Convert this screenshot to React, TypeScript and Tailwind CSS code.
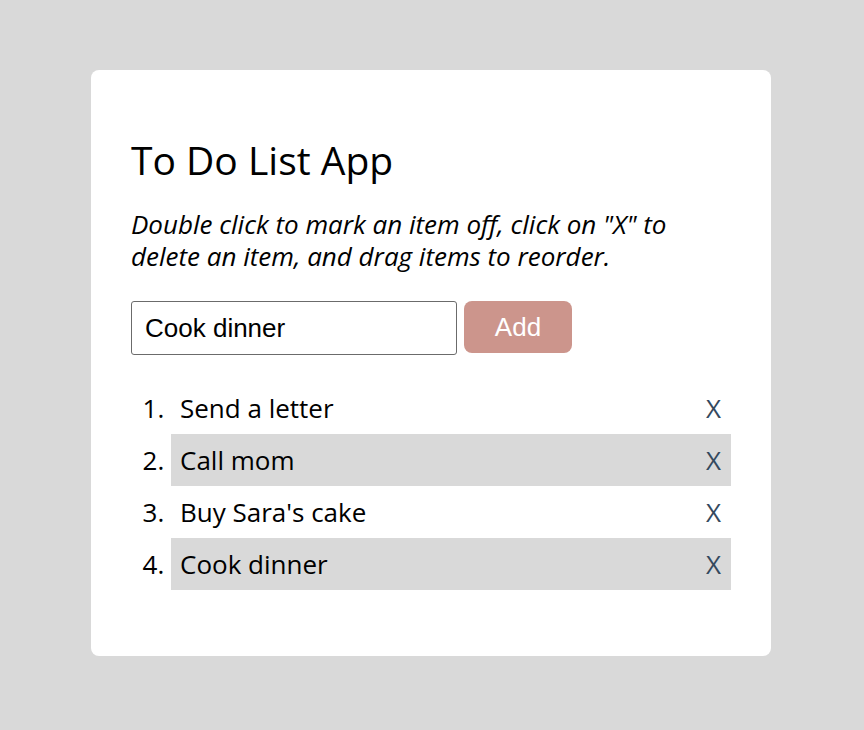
import React, { useState } from "react";

const initialItems = ["Send a letter", "Call mom", "Buy Sara's cake", "Cook dinner"];

export default function App() {
  const [items, setItems] = useState<string[]>(initialItems);
  const [text, setText] = useState("Cook dinner");

  const addItem = () => {
    if (!text.trim()) return;
    setItems([...items, text.trim()]);
  };

  const removeItem = (index: number) => {
    setItems(items.filter((_, i) => i !== index));
  };

  return (
    <div className="min-h-[730px] w-full bg-[#d9d9d9] pt-[70px] pl-[91px] font-['Open_Sans',sans-serif]">
      <div className="w-[680px] rounded-[8px] bg-white px-[40px] pt-[40px] pb-[66px]">
        <h1 className="mt-[24px] text-[39px] leading-[51px] text-black">To Do List App</h1>
        <p className="mt-[23px] text-[26px] italic leading-[32px] text-black">
          Double click to mark an item off, click on "X" to delete an item, and drag items to reorder.
        </p>
        <div className="mt-[29px] flex items-start gap-[7px]">
          <input
            type="text"
            value={text}
            onChange={(e) => setText(e.target.value)}
            className="h-[54px] w-[326px] rounded-[3px] border border-[#6b6b6b] px-[13px] font-['Liberation_Sans',Arial,sans-serif] text-[26px] text-black outline-none"
          />
          <button
            onClick={addItem}
            className="h-[52px] w-[108px] rounded-[8px] bg-[#cc958c] font-['Liberation_Sans',Arial,sans-serif] text-[26px] text-white"
          >
            Add
          </button>
        </div>
        <ol className="mt-[27px] list-decimal pl-[40px] text-[26px] text-black">
          {items.map((item, i) => (
            <li
              key={i}
              className={`pl-[9px] pr-[10px] leading-[52px] ${i % 2 === 1 ? "bg-[#d9d9d9]" : ""}`}
            >
              <div className="flex items-center justify-between">
                <span>{item}</span>
                <button onClick={() => removeItem(i)} className="text-[#34495e]">
                  X
                </button>
              </div>
            </li>
          ))}
        </ol>
      </div>
    </div>
  );
}
